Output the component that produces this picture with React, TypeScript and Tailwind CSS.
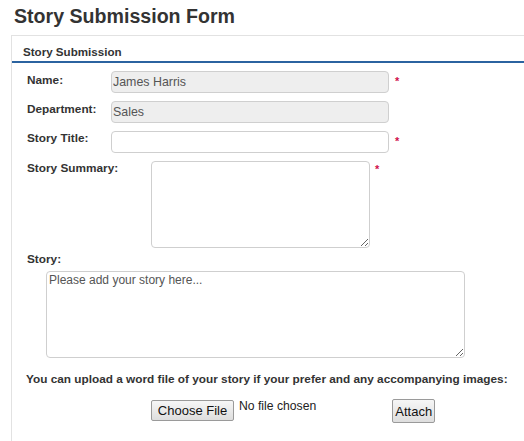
const font = { fontFamily: '"Liberation Sans", Arial, sans-serif' };

function Req({ className = "" }: { className?: string }) {
  return <span className={`text-[11px] leading-[12px] text-[#d0104c] ${className}`}>*</span>;
}

export default function App() {
  return (
    <div className="w-[524px] h-[441px] overflow-hidden bg-white text-[#333]" style={font}>
      <h1 className="pl-[14px] pt-[4px] text-[19.6px] leading-[24px] font-bold text-[#333]">Story Submission Form</h1>

      <div className="ml-[11px] mt-[7px] border-l border-t border-[#e2e2e2] pb-[40px]">
        <div className="pl-[11px] pt-[9px] pb-[2px] text-[11.6px] leading-[14px] font-bold border-b-[2px] border-[#2b63a0]">
          Story Submission
        </div>

        <div className="pl-[15px] pt-[8px] text-[11.8px] font-bold">
          <div className="flex items-start">
            <label className="w-[84px] pt-[2px] leading-[14px]">Name:</label>
            <input
              readOnly
              value="James Harris"
              className="w-[278px] h-[22px] px-[1px] rounded-[4px] border border-[#cfcfcf] bg-[#eeeeee] text-[12.4px] font-normal text-[#555] outline-none"
            />
            <Req className="ml-[6px] pt-[4px]" />
          </div>

          <div className="flex items-start mt-[8px]">
            <label className="w-[84px] pt-[1px] leading-[14px]">Department:</label>
            <input
              readOnly
              value="Sales"
              className="w-[278px] h-[22px] px-[1px] rounded-[4px] border border-[#cfcfcf] bg-[#eeeeee] text-[12.4px] font-normal text-[#555] outline-none"
            />
          </div>

          <div className="flex items-start mt-[8px]">
            <label className="w-[84px] pt-[0px] leading-[14px]">Story Title:</label>
            <input className="w-[278px] h-[22px] rounded-[4px] border border-[#cfcfcf] bg-white outline-none" />
            <Req className="ml-[6px] pt-[4px]" />
          </div>

          <div className="flex items-start mt-[8px]">
            <label className="w-[124px] leading-[14px]">Story Summary:</label>
            <textarea className="w-[219px] h-[87px] rounded-[4px] border border-[#cfcfcf] bg-white outline-none" />
            <Req className="ml-[5px] pt-[2px]" />
          </div>

          <div className="mt-[4px] leading-[14px]">Story:</div>
          <textarea
            placeholder="Please add your story here..."
            className="block ml-[19px] mt-[5px] w-[419px] h-[87px] px-[2px] py-[1px] rounded-[4px] border border-[#cfcfcf] bg-white text-[12px] font-normal leading-[14px] placeholder:text-[#555] outline-none"
          />

          <div className="-ml-[1px] mt-[14px] leading-[14px]">
            You can upload a word file of your story if your prefer and any accompanying images:
          </div>

          <div className="flex items-start mt-[13px] ml-[124px] font-normal">
            <button className="w-[83px] h-[21px] mt-[1px] rounded-[2px] border border-[#9a9a9a] bg-gradient-to-b from-[#f6f6f6] to-[#dedede] text-[13px] leading-[15px] text-[#111]">
              Choose File
            </button>
            <span className="ml-[5px] text-[12.2px] leading-[15px] text-[#222]">No file chosen</span>
            <button className="ml-[76px] w-[43px] h-[24px] rounded-[2px] border border-[#9a9a9a] bg-gradient-to-b from-[#f6f6f6] to-[#dedede] text-[13px] leading-[15px] text-[#111]">
              Attach
            </button>
          </div>
        </div>
      </div>
    </div>
  );
}
